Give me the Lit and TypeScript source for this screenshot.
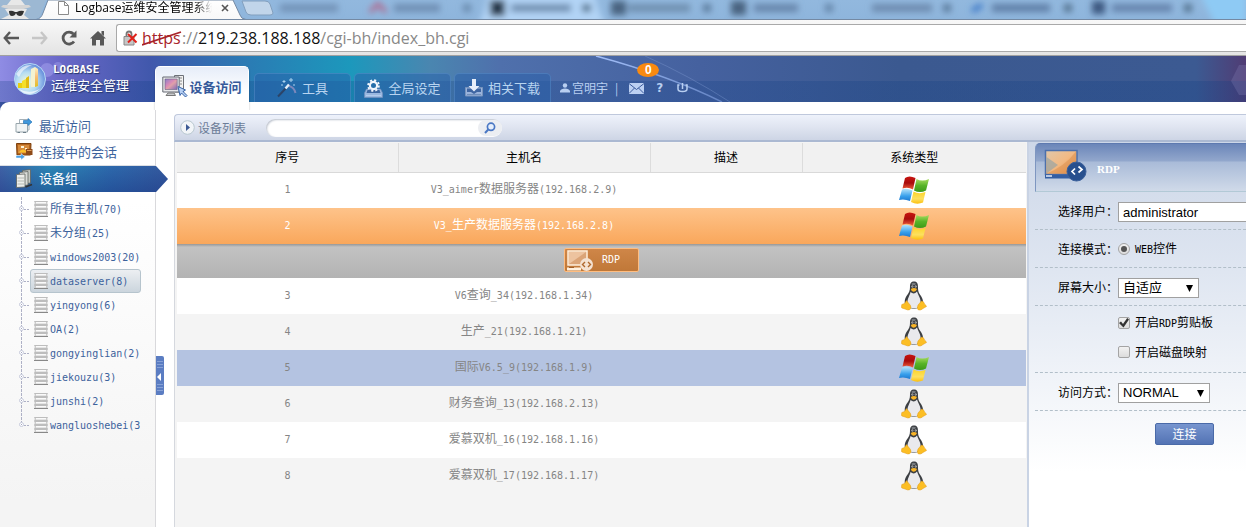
import { LitElement, html, css, svg } from "lit";
import { customElement, property, state } from "lit/decorators.js";
import { classMap } from "lit/directives/class-map.js";

const LATIN_RUN = /([\x21-\x7e]+)/;

/** Sets Latin runs in the half-width face so they take half a CJK cell each. */
const mixed = (text: string) =>
  text
    .split(LATIN_RUN)
    .filter((part) => part !== "")
    .map((part) => (LATIN_RUN.test(part) ? html`<span class="half">${part}</span>` : part));

const base = css`
  * { box-sizing: border-box; }
  button, input, select { font: inherit; color: inherit; margin: 0; }
  a { color: inherit; text-decoration: none; }
  svg { display: block; flex: none; }
  .half { font-family: "DejaVu Sans Mono", monospace; font-size: 10px; }
`;

/* ---------- icons ---------- */

const windowsIcon = html`<svg width="32" height="28" viewBox="0 0 32 28" aria-label="Windows">
  <defs>
    <linearGradient id="wr" x2="0" y2="1"><stop stop-color="#c81410"/><stop offset=".5" stop-color="#a80c0c"/><stop offset="1" stop-color="#f0603c"/></linearGradient>
    <linearGradient id="wg" x2="0" y2="1"><stop stop-color="#a8dc60"/><stop offset=".5" stop-color="#58b428"/><stop offset="1" stop-color="#3c9a18"/></linearGradient>
    <linearGradient id="wb" x2="0" y2="1"><stop stop-color="#b8e4fa"/><stop offset=".6" stop-color="#38a0ec"/><stop offset="1" stop-color="#1c78d0"/></linearGradient>
    <linearGradient id="wy" x2="0" y2="1"><stop stop-color="#fcd428"/><stop offset=".6" stop-color="#fce060"/><stop offset="1" stop-color="#fcc010"/></linearGradient>
  </defs>
  <path d="M7 2Q11-1 17.500 2L15 13.500Q10 10.500 4.500 12.500Z" fill="url(#wr)"/>
  <path d="M18.500 3Q24 6 31 3L28 14.500Q22 17.500 16 14.500Z" fill="url(#wg)"/>
  <path d="M4 13.500Q8.500 11.500 14.500 14.500L12 25Q6 22.500 1 24Z" fill="url(#wb)"/>
  <path d="M15.500 15.500Q21 18.500 27.500 16L25 26.500Q19 29 13 26Z" fill="url(#wy)"/>
</svg>`;

const linuxIcon = html`<svg width="26" height="30" viewBox="0 0 26 30" aria-label="Linux">
  <path d="M13 .5C9.500.500 9 3 9 6c0 4-1 5.500-3.500 9C3.500 18 3 22 5 26l8 2 8-2c2-4 1-8-1-11-2.500-3.500-3-5-3-9 0-3-.5-5.500-4-5.500Z" fill="#3c3f43"/>
  <path d="M9.500 11Q13 14 16 10.500C17 14 20.500 18 19.500 23Q17 28 12.500 27.500 8 27 6.500 22C6 18 9 14 9.500 11Z" fill="#e9e9ed"/>
  <path d="M10.500 2.500Q12 1 15 2.500L14 4H11Z" fill="#777b80"/>
  <circle cx="11.400" cy="5.500" r="1" fill="#ddd"/><circle cx="14.700" cy="5.500" r="1" fill="#ddd"/>
  <circle cx="11.600" cy="5.700" r=".4"/><circle cx="14.500" cy="5.700" r=".4"/>
  <path d="M9.800 8Q13 5.800 16 8q-1 2.500-3.200 2.800T9.800 8Z" fill="#f8b428"/>
  <path d="M5.500 19.500 9.500 24.500Q11 27.500 8.500 28.800 7 29.500 4 28L.8 27Q.2 25.800.8 23.500L3.500 22.500Z" fill="#fcbe24" stroke="#e09a18" stroke-width=".5"/>
  <path d="M20.500 20 17 24Q15.500 28 17.500 29 20 29.500 22 27.500L25.500 25.500Q25.500 24.500 23.500 23L22.500 20.800Z" fill="#fcbe24" stroke="#e09a18" stroke-width=".5"/>
</svg>`;

const serverIcon = html`<svg width="14" height="16" viewBox="0 0 14 16" aria-hidden="true">
  ${[0, 4, 8, 12].map(
    (y) => svg`<path d=${`M.5 ${y + 0.5}H13.500L12.500 ${y + 2}L13.500 ${y + 3.5}H.5L1.500 ${y + 2}Z`} fill="#e4e4e4" stroke="#bdbdbd"/><path d=${`M2 ${y + 1.5}H12`} stroke="#fafafa"/>`
  )}
  <path d="M0 15.500H14" stroke="#888"/>
</svg>`;

const branchIcon = (last: boolean) => html`<svg width="12" height="24" viewBox="0 0 12 24" aria-hidden="true">
  <path d=${last ? "M2.500 0V12" : "M2.500 0V24"} stroke="#aeb1c6" stroke-dasharray="3 1"/>
  <path d="M5 12.500H11" stroke="#aeb1c6" stroke-dasharray="2 1"/>
  <circle cx="2.500" cy="11.500" r="2" fill="#fff" stroke="#c6cadb"/><path d="M2 11.500h1" stroke="#a4a8c0"/>
</svg>`;

const recentIcon = html`<svg width="18" height="16" viewBox="0 0 18 16" aria-hidden="true">
  <path d="M4.500 1.500H14V12H4.500Z" fill="#fff" stroke="#a4b0b8"/><path d="M1 5.500H12.500V14H1Z" fill="#f1f4f5" stroke="#98a6ac"/>
  <path d="M2.500 14.500H5M8 14.500H11" stroke="#70808a"/>
  <path d="M8.500 2.500H13V.5L17 4 13 7.500V5.500H8.500Z" fill="#3f98dc" stroke="#2c78ba" stroke-width=".7"/>
</svg>`;

const sessionIcon = html`<svg width="18" height="17" viewBox="0 0 18 17" aria-hidden="true">
  <path d="M1.500.5H16L15.500 12H2Z" fill="#b5651d" stroke="#7c3f0c"/><path d="M3 2H14V10H3Z" fill="#d58a3c"/>
  <path d="M3.500 9.500Q8 3.500 12.500 9.500Z" fill="#fbc02a"/><path d="M6 3h3v2H6ZM10 5h2v1.500h-2Z" fill="#fff3d5"/>
  <path d="M11 6h6.500v6H11Z" fill="#8e4a18"/><path d="M12 7.500h4.500" stroke="#e0a060"/>
  <path d="M1 12.500H6V10.500L10 13.700 6 17V15H1Z" fill="#4aa0e6" stroke="#fff" stroke-width=".5"/>
</svg>`;

const groupIcon = html`<svg width="17" height="19" viewBox="0 0 17 19" aria-hidden="true">
  <g stroke="#5e625e" stroke-width=".8"><path d="M7 1.500 15 .5V14L7 15Z" fill="#c4c8c2"/><path d="M4 3.500 12.500 2.500V16L4 17Z" fill="#dadcd8"/><path d="M1 5.500 9.500 5V18L1 18.500Z" fill="#edeeea"/></g>
  <path d="M2 9H9M2 12H9M2 15H9" stroke="#b4b8b2"/><path d="M10 18 16.500 15.500" stroke="#333" stroke-width="1.500"/>
</svg>`;

const accessIcon = html`<svg width="26" height="23" viewBox="0 0 26 23" aria-hidden="true">
  <defs><linearGradient id="scr" x2="1" y2="1"><stop stop-color="#8a80c8"/><stop offset=".4" stop-color="#d88ab8"/><stop offset=".55" stop-color="#e0a0a8"/><stop offset="1" stop-color="#7c68b8"/></linearGradient></defs>
  <path d="M12.500 .5H21.500V17H12.500Z" fill="#f2f2f2" stroke="#6d7178"/><path d="M14 3H20M18 6H20M18 9H20" stroke="#888"/>
  <path d="M.8 2H17.200V17H.8Z" fill="#e8e8ea" stroke="#666b74"/><path d="M3 4H15.200V14.500H3Z" fill="url(#scr)" stroke="#686080" stroke-width=".6"/>
  <path d="M6 18H12L13.500 20.500H4Z" fill="#c8cacd" stroke="#777"/>
  <path d="M16 11.500 23.500 15 21 16.500 25 20.500 23.500 22 19.500 18 18 20.500Z" fill="#b7d0f4" stroke="#3864a8"/>
</svg>`;

const wandIcon = html`<svg width="20" height="20" viewBox="0 0 20 20" aria-hidden="true">
  <path d="M1 18.500 10 9" stroke="#2c4468" stroke-width="2"/><path d="M8.500 10.500 12 6.500" stroke="#e2eef9" stroke-width="2.500"/>
  <path d="M12 8Q17 9 18.500 15" stroke="#b59bc8" stroke-width="2" fill="none" opacity=".6"/>
  <path d="M7 2v3M5.500 3.500h3M14 0v4M12 2h4M4 7h2M16 7h2" stroke="#a9d2ee"/>
</svg>`;

const settingsIcon = html`<svg width="19" height="19" viewBox="0 0 19 19" aria-hidden="true">
  <path d="M2.500 10H16.500L18.500 14V18.500H.5V14Z" fill="#9ab8e0" stroke="#7290bd" stroke-width=".7"/><path d="M3.500 11H15.500L16.500 14H2.500Z" fill="#3c66a0"/>
  <circle cx="9.500" cy="6.500" r="3.600" fill="none" stroke="#f2f7fd" stroke-width="2.200"/><circle cx="9.500" cy="6.500" r="5.400" fill="none" stroke="#f2f7fd" stroke-width="1.800" stroke-dasharray="2.120 2.120"/>
  <path d="M2 16.500H17" stroke="#b4ccec"/>
</svg>`;

const downloadIcon = html`<svg width="18" height="18" viewBox="0 0 18 18" aria-hidden="true">
  <path d="M.5 8.500H17.500V17H.5Z" fill="#9ab4dc" stroke="#7894bd"/><path d="M2 9.500H16V13H12L9 15 6 13H2Z" fill="#3f66a2"/>
  <path d="M7 0H11V7H14.500L9 12.500 3.500 7H7Z" fill="#e8effa"/><path d="M2 15.500H16" stroke="#718fbb"/>
</svg>`;

const logoIcon = html`<svg width="34" height="34" viewBox="0 0 34 34" aria-hidden="true">
  <defs>
    <radialGradient id="ball" cx=".4" cy=".6" r=".65"><stop stop-color="#f7fbd8"/><stop offset=".5" stop-color="#b4dcf4"/><stop offset="1" stop-color="#5c84d8"/></radialGradient>
    <linearGradient id="bar" x2="0" y2="1"><stop stop-color="#fff4c4"/><stop offset=".5" stop-color="#f8bd78"/><stop offset="1" stop-color="#e0c020"/></linearGradient>
  </defs>
  <circle cx="17" cy="17" r="15.500" fill="url(#ball)" stroke="#b8daf6"/>
  <path d="M5 21h4v5H5Z" fill="#e8cf10"/><path d="M9 19 13 17v9H9Z" fill="#f5df28"/><path d="M13 16l3-2v12h-3Z" fill="#e2bb10"/><path d="M18 7 22 5v20h-4Z" fill="#f4f2d0"/><path d="M22 5 25 7v17l-3 1Z" fill="url(#bar)"/>
  <path d="M3 12Q9 2 19 3 9 7 6 15Z" fill="#fff" opacity=".6"/><path d="M6 27Q17 33 28 26 22 32 16 32T6 27Z" fill="#fff" opacity=".7"/>
</svg>`;

const caret = html`<svg class="caret" width="7" height="7" viewBox="0 0 7 7" aria-hidden="true"><path d="M0 0H7L3.500 7Z" fill="#000"/></svg>`;

/* ---------- browser frame ---------- */

@customElement("browser-frame")
class BrowserFrame extends LitElement {
  static styles = [base, css`
    :host { display: block; font-family: "Open Sans", "Noto Sans CJK SC", sans-serif; }
    .strip { display: grid; height: 20px; overflow: hidden; background: linear-gradient(#92b8de, #8eb5dc); border-bottom: 1px solid #7489a3; }
    .strip > * { grid-area: 1 / 1; }
    .front { display: flex; align-items: flex-start; height: 20px; padding-left: 56px; gap: 6px; font-size: 12px; line-height: 16px; color: #000; }
    .front svg { margin-top: 1px; }
    .name { width: 137px; overflow: hidden; white-space: nowrap; font-size: 12px; mask-image: linear-gradient(90deg, #000 120px, transparent); }
    .close { border: 0; padding: 3px; background: none; }
    .tools { display: flex; align-items: center; height: 36px; padding-left: 3px; background: linear-gradient(#f8f8f8, #e4e4e4); border-bottom: 1px solid #a1a1a1; }
    .nav { border: 0; background: none; padding: 0; width: 29px; display: flex; }
    .address { flex: 1; display: flex; align-items: center; height: 28px; margin-left: -3px; padding-left: 6px; gap: 4px; background: #fff; border: 1px solid #a9a9a9; border-right: 0; border-radius: 3px 0 0 3px; font-size: 16px; line-height: 24px; color: #888; white-space: nowrap; }
    .scheme { color: #a8232a; display: inline-grid; }
    .scheme > * { grid-area: 1 / 1; }
    .host { color: #111; }
  `];
  render() {
    const blobs: [number, number, string][] = [
      [280, 58, "#7393b8"], [394, 46, "#6f8fb4"], [463, 8, "#6b8bae"], [511, 60, "#6f8eb0"], [582, 9, "#54738f"],
      [628, 62, "#7090b0"], [703, 8, "#5c7c9c"], [754, 44, "#6886ac"], [825, 8, "#6585a8"], [872, 60, "#6e8cb0"], [943, 8, "#5c7c9c"],
      [992, 58, "#6080a8"], [1064, 8, "#54738f"], [1112, 60, "#6684ad"], [1184, 8, "#54738f"],
    ];
    return html`
      <div class="strip">
        <svg width="100%" height="19" viewBox="0 0 1246 19" preserveAspectRatio="xMinYMin slice" aria-hidden="true">
          <defs><filter id="soft"><feGaussianBlur stdDeviation="3"/></filter><linearGradient id="page" x2="0" y2="1"><stop stop-color="#fff"/><stop offset="1" stop-color="#f8f8f8"/></linearGradient></defs>
          <g filter="url(#soft)">
            <path d="M476 24Q484 20 488-8H594Q600 20 608 24Z" fill="#b2d4f6"/>
            <path d="M1200-6H1246V24H1215Z" fill="#8ecaf4"/>
            ${blobs.map(([x, w, c]) => svg`<rect x=${x} y="4" width=${w} height="8" fill=${c}/>`)}
            <path d="M370 12 378 4 386 12" fill="none" stroke="#b0688c" stroke-width="4"/><path d="M972 11 982 5" stroke="#3f7ac8" stroke-width="5"/>
            <rect x="490" y="0" width="15" height="16" fill="#27384c"/><rect x="611" y="1" width="15" height="14" fill="#4a6480"/><rect x="731" y="1" width="15" height="14" fill="#4a6480"/><rect x="1092" y="1" width="13" height="13" fill="#3c5880"/>
          </g>
          <path d="M0 19V0H46L40 16Q38 19 36 19Z" fill="#9cb8d3"/>
          <path d="M36 19.500Q41 19 43 13L48 0H233L240 15Q241 19 246 19.500Z" fill="url(#page)" stroke="#7489a3"/>
          <path d="M242 1H265Q269 1 270 4L273 13Q273 15 270 15H251Q247 15 246 12Z" fill="#c1d5ea" stroke="#829fbe"/>
          <path d="M7 5 11 0H21L25 5Z" fill="#e8e8e8"/><path d="M1 7Q16 12 31 7L29 5H3Z" fill="#d5d5d5"/><path d="M5 9H27L24 15 29 19H1L9 15Z" fill="#e8e8e8"/>
          <path d="M9 11Q12 10 15 12H17Q20 10 24 11 23 16 20 16 17 16 16 13 15 16 12 16 9 16 9 11Z" fill="#333"/>
        </svg>
        <div class="front">
          <svg width="13" height="14" viewBox="0 0 13 14" aria-hidden="true"><path d="M2.500.5H8.500L12.500 4.500V13.500H2.500Z M8.500.5V4.500H12.500" fill="#fff" stroke="#8b8b8b"/></svg>
          <span class="name">Logbase运维安全管理系统</span>
          <button class="close" aria-label="关闭标签页"><svg width="8" height="8" viewBox="0 0 8 8"><path d="M1 1 7 7M7 1 1 7" stroke="#555" stroke-width="1.600"/></svg></button>
        </div>
      </div>
      <div class="tools">
        <button class="nav" aria-label="后退"><svg width="16" height="14" viewBox="0 0 16 14"><path d="M7 1 1.800 7 7 13M2 7H16" fill="none" stroke="#585858" stroke-width="2.400"/></svg></button>
        <button class="nav" aria-label="前进"><svg width="16" height="14" viewBox="0 0 16 14"><path d="M9 1 14.200 7 9 13M14 7H0" fill="none" stroke="#c6c6c6" stroke-width="2.400"/></svg></button>
        <button class="nav" aria-label="刷新"><svg width="16" height="16" viewBox="0 0 16 16"><path d="M13 11.500A6 6 0 1 1 12.500 4" fill="none" stroke="#585858" stroke-width="2.800"/><path d="M15.500.5V7.500H8.500Z" fill="#585858"/></svg></button>
        <button class="nav" aria-label="主页"><svg width="16" height="16" viewBox="0 0 16 16"><path d="M8 1 16 8.500H14V15.500H10V10H6V15.500H2V8.500H0Z M11.500 1H14V6L11.500 4Z" fill="#585858"/></svg></button>
        <div class="address">
          <svg width="15" height="16" viewBox="0 0 15 16" aria-hidden="true"><path d="M3.500 7V4Q3.500 1.500 6 1.500T8.500 4V7" fill="none" stroke="#777" stroke-width="1.800"/><path d="M1 6.500H11V15H1Z" fill="#c6c6c6" stroke="#888"/><path d="M5 4 13.500 12.500M13.500 4 5 12.500" stroke="#e0221b" stroke-width="2"/></svg>
          <div><span class="scheme"><span>https</span><svg width="40" height="24" viewBox="0 0 40 24" aria-hidden="true"><path d="M0 19 39 6" stroke="#a8232a" stroke-width="1.800"/></svg></span>://<span class="host">219.238.188.188</span>/cgi-bh/index_bh.cgi</div>
        </div>
      </div>`;
  }
}

/* ---------- product header ---------- */

@customElement("product-header")
class ProductHeader extends LitElement {
  static styles = [base, css`
    :host { display: block; font-family: "Noto Sans CJK SC", sans-serif; }
    .bar { display: grid; height: 46px; background: linear-gradient(transparent 25px, rgba(14, 60, 130, 0.25) 25px), linear-gradient(90deg, #8f8ce4 0, #6a68c8 60px, #4158ac 150px, #2a7cb4 250px, #1c98bc 350px, #4a86b0 430px, #4f70ac 500px, #45619f 700px, #3b5990 900px, #3c5a92 96%, #503c74); }
    .bar > * { grid-area: 1 / 1; }
    .row { display: flex; align-items: flex-end; z-index: 1; }
    .brand { display: flex; align-items: center; width: 155px; height: 46px; padding-left: 13px; gap: 4px; color: #fff; font-size: 13px; line-height: 14px; text-shadow: 1px 1px 1px #24366f; }
    .names { display: grid; grid-template-rows: 13px 19px; }
    .word { font: bold 11px/13px "DejaVu Sans Mono", monospace; padding-left: 2px; }
    .zh { line-height: 17px; }
    .tabs { display: flex; align-items: flex-end; gap: 3px; }
    .tab { display: flex; align-items: center; justify-content: center; gap: 5px; width: 97px; height: 29px; border: 1px solid rgba(110, 160, 215, 0.35); border-bottom: 0; border-radius: 5px 5px 0 0; background: rgba(40, 95, 170, 0.5); color: #b8d4f0; font-size: 13px; line-height: 20px; white-space: nowrap; }
    .tab.on { width: 94px; height: 44px; margin: 0 2px -8px 0; padding-bottom: 4px; gap: 1px; color: #35599a; font-weight: bold; background: linear-gradient(#e6edf9, #fff 60%); border-color: #fff; box-shadow: 0 1px 2px rgba(0, 0, 0, .3); clip-path: inset(0 -3px 0 -3px); }
    .user { display: flex; align-items: center; height: 28px; padding-left: 9px; color: #b9cff1; font-size: 12px; line-height: 20px; }
    .me { display: flex; align-items: center; gap: 2px; margin-right: 7px; }
    .mail { position: relative; margin: 0 12px 0 11px; }
    .badge { position: absolute; left: 8px; top: -20px; width: 22px; height: 14px; border-radius: 50%; background: #f98a10; color: #fff; font: bold 12px/14px "Liberation Sans", sans-serif; text-align: center; }
    .help { font: bold 12px/20px "DejaVu Sans", sans-serif; margin-right: 14px; }
  `];
  render() {
    const tabs = [
      { label: "设备访问", icon: accessIcon, on: true },
      { label: "工具", icon: wandIcon, on: false },
      { label: "全局设定", icon: settingsIcon, on: false },
      { label: "相关下载", icon: downloadIcon, on: false },
    ];
    return html`<header class="bar">
      <svg width="100%" height="46" viewBox="0 0 1246 46" preserveAspectRatio="xMinYMin slice" aria-hidden="true">
        <defs><linearGradient id="ray" gradientUnits="userSpaceOnUse" x1="596" y1="0" x2="726" y2="46"><stop stop-color="#a4c0fa"/><stop offset="1" stop-color="#6080c0"/></linearGradient></defs>
        <path d="M596 0Q670 20 722 46" fill="none" stroke="url(#ray)" stroke-width="1.500"/><path d="M645 0Q690 20 730 46" fill="none" stroke="#7c98d0" opacity=".4"/>
        <circle cx="47" cy="14" r="7" fill="#a8a4f0" opacity=".5"/><circle cx="58" cy="11" r="5" fill="#a8a4f0" opacity=".4"/>
        <path d="M1246 9H1239L1231 25 1239 39H1246Z" fill="#8a8cc0" opacity=".25"/>
      </svg>
      <div class="row">
        <div class="brand">${logoIcon}<div class="names"><div class="word">LOGBASE</div><div class="zh">运维安全管理</div></div></div>
        <nav class="tabs">${tabs.map((t) => html`<a href="#" class=${classMap({ tab: true, on: t.on })}>${t.icon}<span>${t.label}</span></a>`)}</nav>
        <div class="user">
          <span class="me"><svg width="10" height="10" viewBox="0 0 10 10" aria-hidden="true"><circle cx="5" cy="2.500" r="2.200" fill="currentColor"/><path d="M0 9.500V8Q1 5.500 5 5.500T10 8V9.500Z" fill="currentColor"/></svg>宫明宇</span>
          <span>|</span>
          <a class="mail" href="#" aria-label="消息"><svg width="15" height="11" viewBox="0 0 15 11"><path d="M0 0H15V11H0Z" fill="#bcd0f2"/><path d="M0 .5 7.500 6.500 15 .5M0 10.500 5.500 5M15 10.500 9.500 5" fill="none" stroke="#3a5a9c"/></svg><span class="badge">0</span></a>
          <a class="help" href="#">?</a>
          <a href="#" aria-label="退出"><svg width="11" height="10" viewBox="0 0 11 10"><path d="M2.500 2H1V6Q1 8.500 5.500 8.500T10 6V2H8.500M5.500 0V6" fill="none" stroke="currentColor" stroke-width="1.500"/></svg></a>
        </div>
      </div>
    </header>`;
  }
}

/* ---------- left navigation ---------- */

@customElement("side-nav")
class SideNav extends LitElement {
  static styles = [base, css`
    :host { display: block; width: 156px; flex: none; background: #35509c; font-family: "Noto Sans CJK SC", sans-serif; }
    .panel { min-height: 100%; padding-top: 12px; background: linear-gradient(#fff 100px, #f4f4f4 400px); border-right: 1px solid #d9d9dc; border-top-left-radius: 9px; }
    .item { display: flex; align-items: center; gap: 6px; height: 26px; padding: 0 0 2px 15px; color: #3c629c; font-size: 13px; line-height: 22px; border-bottom: 1px solid #dcdfe4; }
    .item svg { width: 18px; }
    .item.on { width: 168px; color: #fff; border: 0; background: linear-gradient(transparent, rgba(20, 40, 120, .35)), linear-gradient(90deg, #3f62a6, #2b86b4 50px, #2d69ac 110px, #34599e); clip-path: polygon(0 0, 156px 0, 100% 50%, 156px 100%, 0 100%); position: relative; z-index: 1; }
    .tree { list-style: none; margin: 0; padding: 5px 14px 0 19px; }
    .node { display: flex; align-items: center; }
    .link { flex: 1; min-width: 0; display: flex; align-items: center; gap: 2px; height: 24px; margin-left: -1px; padding-left: 3px; border: 1px solid transparent; border-radius: 3px; color: #3c629c; font-size: 12px; line-height: 20px; overflow: hidden; white-space: nowrap; }
    .link.on { background: linear-gradient(#eceff2, #cbd5dd); border-color: #b6c4cd; }
  `];
  @state() private current = "dataserver(8)";
  render() {
    const groups = ["所有主机(70)", "未分组(25)", "windows2003(20)", "dataserver(8)", "yingyong(6)", "OA(2)", "gongyinglian(2)", "jiekouzu(3)", "junshi(2)", "wangluoshebei(3"];
    return html`<nav class="panel">
      <a class="item" href="#">${recentIcon}最近访问</a>
      <a class="item" href="#">${sessionIcon}连接中的会话</a>
      <a class="item on" href="#">${groupIcon}设备组</a>
      <ul class="tree">
        ${groups.map((g, i) => html`<li class="node">${branchIcon(i === groups.length - 1)}<a href="#" class=${classMap({ link: true, on: g === this.current })} @click=${() => (this.current = g)}>${serverIcon}<span>${mixed(g)}</span></a></li>`)}
      </ul>
    </nav>`;
  }
}

/* ---------- host table ---------- */

interface Host { name: string; os: "windows" | "linux"; }

@customElement("host-table")
class HostTable extends LitElement {
  static styles = [base, css`
    :host { display: block; flex: 1; min-width: 0; padding: 1px 2px 0; background: #f4f4f4; border-left: 1px solid #d5d8de; font-family: "Noto Sans CJK SC", sans-serif; }
    .hosts { width: 100%; table-layout: fixed; border-collapse: collapse; font-size: 12px; line-height: 20px; color: #858585; text-align: center; }
    .c1 { width: 221px; } .c2 { width: 252px; } .c3 { width: 152px; } .c4 { width: 224px; }
    th { height: 29px; padding: 0; font-weight: normal; color: #000; background: #f1f1f1; border-bottom: 1px solid #d9d9d9; border-right: 1px solid #dcdcdc; }
    th:last-child { border-right: 0; }
    td { height: 36px; padding: 0 0 2px; }
    .plain { background: #fff; } .alt { background: #f4f4f4; } .hover { background: #b4c3e1; }
    .chosen { background: linear-gradient(#fec38a, #f9a75b); color: #fff; }
    .launch td { height: 34px; background: linear-gradient(#979797, #c2c2c2 3px, #b3b3b3); }
    td svg { margin: 2px auto 0; }
    .rdp { display: inline-flex; align-items: center; gap: 8px; width: 75px; height: 24px; padding: 0 2px; background: linear-gradient(#cf8648, #c07838); border: 1px solid #ffbd80; border-radius: 2px; color: #fff; vertical-align: middle; }
    .rdp svg { margin: 0; }
  `];
  render() {
    const hosts: Host[] = [
      { name: "V3_aimer数据服务器(192.168.2.9)", os: "windows" },
      { name: "V3_生产数据服务器(192.168.2.8)", os: "windows" },
      { name: "V6查询_34(192.168.1.34)", os: "linux" },
      { name: "生产_21(192.168.1.21)", os: "linux" },
      { name: "国际V6.5_9(192.168.1.9)", os: "windows" },
      { name: "财务查询_13(192.168.2.13)", os: "linux" },
      { name: "爱慕双机_16(192.168.1.16)", os: "linux" },
      { name: "爱慕双机_17(192.168.1.17)", os: "linux" },
    ];
    const tone = (i: number) => (i === 1 ? "chosen" : i === 4 ? "hover" : i % 2 ? "alt" : "plain");
    return html`<table class="hosts">
      <colgroup><col class="c1"><col class="c2"><col class="c3"><col class="c4"></colgroup>
      <thead><tr><th>序号</th><th>主机名</th><th>描述</th><th>系统类型</th></tr></thead>
      <tbody>
        ${hosts.map((h, i) => html`
          <tr class=${tone(i)}><td>${mixed(String(i + 1))}</td><td>${mixed(h.name)}</td><td></td><td>${h.os === "windows" ? windowsIcon : linuxIcon}</td></tr>
          ${i === 1 ? html`<tr class="launch"><td colspan="4"><button class="rdp">
            <svg width="27" height="21" viewBox="0 0 27 21" aria-hidden="true"><path d="M1 1H20V15H1Z" fill="#dba477" stroke="#fff0dd" stroke-width="1.500"/><path d="M2 14 19 2H2Z" fill="#edc39f"/><path d="M0 19H14" stroke="#fff0dd" stroke-width="3"/><path d="M2 17.500H7" stroke="#a35f28"/><circle cx="19.500" cy="14.500" r="6.500" fill="#f4e2d2"/><path d="M18 12 15.500 14.500 18 17M21 12 23.500 14.500 21 17" fill="none" stroke="#b0692e" stroke-width="1.400"/></svg>
            ${mixed("RDP")}</button></td></tr>` : ""}`)}
      </tbody>
    </table>`;
  }
}

/* ---------- connection form ---------- */

@customElement("connect-form")
class ConnectForm extends LitElement {
  static styles = [base, css`
    :host { display: block; width: 219px; flex: none; padding: 1px 0 0 6px; background: linear-gradient(#cdd7e8, #dfe6f1 130px, #fff 330px); border-left: 2px solid #c9d3e4; font-family: "Noto Sans CJK SC", sans-serif; font-size: 12px; line-height: 20px; color: #000; }
    .head { display: flex; align-items: center; gap: 10px; height: 49px; margin: 0; padding: 0 0 4px 8px; color: #fff; font: bold 11px/20px "Liberation Serif", serif; background: linear-gradient(#6b86b9, #92a7cc 17px, #a9bbd8 18px, #d0dae9); border-top: 1px solid #5e7ab0; border-left: 1px solid #7e96c0; border-radius: 5px 0 0 0; border-bottom: 1px solid #b2c9d6; }
    .head span { padding-top: 6px; }
    .field { display: grid; grid-template-columns: 83px 1fr; align-items: center; height: 38px; border-bottom: 1px dashed #b2bfc9; }
    .label { text-align: right; white-space: nowrap; }
    .text { width: 100%; height: 20px; margin-top: 3px; padding: 0 4px; font: 13px/18px "Liberation Sans", sans-serif; background: #fff; border: 1px solid #a0a0a0; border-right: 0; border-radius: 0; }
    .pick { display: inline-grid; align-items: center; width: 81px; margin-top: 3px; }
    .pick.wide { width: 92px; }
    .pick > * { grid-area: 1 / 1; }
    .pick select { appearance: none; width: 100%; height: 20px; padding: 0 4px; background: #fff; border: 1px solid #a0a0a0; border-radius: 0; font: 13px/18px "Liberation Sans", "Noto Sans CJK SC", sans-serif; }
    .caret { justify-self: end; margin-right: 6px; pointer-events: none; }
    .choice { display: flex; align-items: center; gap: 5px; height: 20px; }
    .choice input { appearance: none; flex: none; display: grid; place-items: center; width: 12px; height: 12px; border: 1px solid #a4a4a4; border-radius: 2px; background: linear-gradient(#f2f2f2, #dcdcdc); }
    .choice input[type="radio"] { border-radius: 50%; }
    input[type="radio"]:checked::before { content: ""; width: 6px; height: 6px; border-radius: 50%; background: #555; }
    input[type="checkbox"]:checked::before { content: ""; width: 10px; height: 10px; background: #333; clip-path: polygon(0 50%, 20% 36%, 40% 60%, 82% 0, 100% 14%, 45% 94%); }
    .checks { display: flex; flex-direction: column; gap: 9px; height: 67px; padding: 7px 0 0 83px; border-bottom: 1px dashed #b2bfc9; }
    .go { display: block; width: 59px; height: 22px; margin: 12px 0 0 120px; padding: 0; font-size: 12px; line-height: 20px; color: #fff; background: linear-gradient(#7795cf, #5373b4); border: 1px solid #4a6aa8; border-radius: 2px; }
  `];
  @property() user = "administrator";
  render() {
    return html`<form @submit=${(e: Event) => e.preventDefault()}>
      <h2 class="head"><svg width="43" height="33" viewBox="0 0 43 33" aria-hidden="true">
        <defs><linearGradient id="mon" x2="1" y2="1"><stop stop-color="#e0c8ac"/><stop offset=".5" stop-color="#f2b983"/><stop offset="1" stop-color="#e88e42"/></linearGradient></defs>
        <path d="M1.500 1.500H33V25.500H1.500Z" fill="url(#mon)" stroke="#4c70ac" stroke-width="1.500"/><path d="M2.500 24.500 14 16 2.500 8Z" fill="#8aa0a8" opacity=".6"/><path d="M2.500 24.500Q20 18 32 2.500V24.500Z" fill="#d88a48" opacity=".45"/>
        <path d="M1 27.500H26" stroke="#345ea2" stroke-width="4"/><path d="M2 27H8" stroke="#e6edf6" stroke-width="1.500"/>
        <circle cx="32.500" cy="22.500" r="9.500" fill="#28508e" stroke="#3b609c"/><path d="M31 19.500 28 22.500 31 25.500M34.500 17.500 38 20.500 34.500 23.500" fill="none" stroke="#fff" stroke-width="1.700"/>
      </svg><span>RDP</span></h2>
      <div class="field"><label class="label" for="user">选择用户：</label><input class="text" id="user" .value=${this.user}></div>
      <div class="field"><span class="label">连接模式：</span><label class="choice"><input type="radio" name="mode" checked><span>${mixed("WEB控件")}</span></label></div>
      <div class="field"><label class="label" for="size">屏幕大小：</label><span class="pick"><select id="size"><option>自适应</option></select>${caret}</span></div>
      <div class="checks">
        <label class="choice"><input type="checkbox" checked><span>${mixed("开启RDP剪贴板")}</span></label>
        <label class="choice"><input type="checkbox"><span>开启磁盘映射</span></label>
      </div>
      <div class="field"><label class="label" for="way">访问方式：</label><span class="pick wide"><select id="way"><option>NORMAL</option></select>${caret}</span></div>
      <button class="go">连接</button>
    </form>`;
  }
}

/* ---------- page ---------- */

@customElement("app-root")
class AppRoot extends LitElement {
  static styles = [base, css`
    :host { display: flex; flex-direction: column; min-height: 100vh; overflow: hidden; background: #fff; font-family: "Noto Sans CJK SC", sans-serif; }
    .body { flex: 1; display: flex; }
    .gutter { position: relative; width: 18px; flex: none; }
    .fold { position: absolute; left: 0; top: 254px; width: 8px; height: 39px; padding: 0; border: 0; border-radius: 0 2px 2px 0; background: #5b7dc2; }
    .main { flex: 1; min-width: 0; display: flex; flex-direction: column; padding-top: 12px; }
    .title { display: flex; align-items: center; height: 28px; padding-left: 5px; gap: 3px; color: #6c7c98; font-size: 12px; line-height: 20px; background: linear-gradient(#eef2fb, #dfe4f0 50%, #cdd5e5); border: 1px solid #bfc8dc; border-right: 0; border-bottom: 2px solid #abb9d2; border-top-left-radius: 4px; }
    .search { display: flex; align-items: center; width: 236px; height: 18px; margin-left: 17px; border-radius: 9px; background: #fff; box-shadow: inset 1px 1px 2px #bcc2cd; }
    .query { flex: 1; min-width: 0; height: 18px; padding: 0 8px; border: 0; outline: 0; background: none; }
    .find { display: grid; place-items: center; width: 24px; height: 16px; padding: 0; border: 0; border-radius: 8px; background: #eceef2; }
    .split { flex: 1; display: flex; }
  `];
  render() {
    return html`
      <browser-frame></browser-frame>
      <product-header></product-header>
      <div class="body">
        <side-nav></side-nav>
        <div class="gutter"><button class="fold" aria-label="收起侧栏"><svg width="8" height="39" viewBox="0 0 8 39"><path d="M1.500 5.500H7M1.500 8.500H7M1.500 11.500H7M1.500 28.500H7M1.500 31.500H7M1.500 34.500H7" stroke="#b4c6ea" stroke-dasharray="1 1"/><path d="M5 17V25L1 21Z" fill="#fff"/></svg></button></div>
        <main class="main">
          <div class="title">
            <svg width="15" height="15" viewBox="0 0 15 15" aria-hidden="true"><circle cx="7.500" cy="7.500" r="6.800" fill="#f2f5f8" stroke="#b9c8d0"/><path d="M6 4 10 7.500 6 11Z" fill="#3c5a94"/></svg>
            <label for="query">设备列表</label>
            <div class="search"><input class="query" id="query"><button class="find" aria-label="搜索"><svg width="12" height="12" viewBox="0 0 12 12"><circle cx="7" cy="4.800" r="3.600" fill="#e6effc" stroke="#4b78c4" stroke-width="1.700"/><path d="M4.300 7.500 1 11" stroke="#4b78c4" stroke-width="2"/></svg></button></div>
          </div>
          <div class="split"><host-table></host-table><connect-form></connect-form></div>
        </main>
      </div>`;
  }
}
